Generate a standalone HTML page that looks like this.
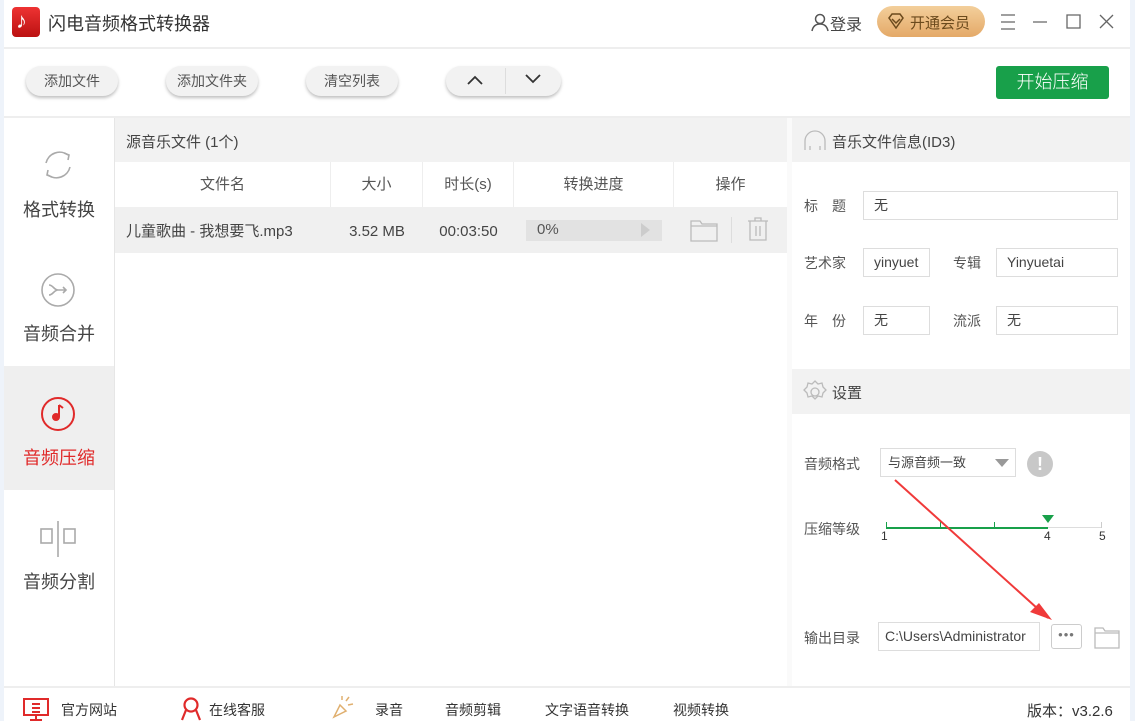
<!DOCTYPE html>
<html><head><meta charset="utf-8"><style>
*{margin:0;padding:0;box-sizing:border-box}
body{width:1135px;height:721px;overflow:hidden;background:#fff;font-family:"Liberation Sans","Noto Sans CJK SC",sans-serif;color:#333;position:relative;font-size:14px}
.a{position:absolute}
.btn{position:absolute;top:66px;height:30px;border-radius:15px;background:#f2f2f2;box-shadow:0 2px 3px rgba(0,0,0,.25);font-size:14px;color:#555;text-align:center;line-height:30px}
.side{position:absolute;left:4px;width:110px;text-align:center;font-size:18px;color:#444}
.th{position:absolute;top:162px;height:45px;line-height:45px;text-align:center;color:#555;font-size:15px;border-right:1px solid #eee}
.td{position:absolute;top:207px;height:46px;line-height:46px;text-align:center;color:#444;font-size:15px}
.lbl{position:absolute;font-size:14px;color:#555}
.inp{position:absolute;height:29px;border:1px solid #ddd;background:#fff;font-size:14px;color:#444;line-height:27px;padding-left:10px}
.ft{position:absolute;top:700px;font-size:14px;color:#333}
</style></head><body>
<div class="a" style="left:0;top:0;width:4px;height:721px;background:#eef3fa"></div>
<div class="a" style="left:1130px;top:0;width:5px;height:721px;background:#eef3fa"></div>
<!-- title -->
<div class="a" style="left:12px;top:7px;width:28px;height:30px;border-radius:4px;background:linear-gradient(#e33,#b11)"></div>
<div class="a" style="left:16px;top:8px;color:#fff;font-size:22px;font-weight:bold">♪</div>
<div class="a" style="left:48px;top:10px;font-size:18px;color:#333">闪电音频格式转换器</div>
<svg class="a" style="left:810px;top:12px" width="20" height="20" viewBox="0 0 20 20" fill="none" stroke="#555" stroke-width="1.5"><circle cx="10" cy="7" r="4.5"/><path d="M2 19c1-5 4-7 8-7s7 2 8 7"/></svg>
<div class="a" style="left:830px;top:11px;font-size:16px;color:#444">登录</div>
<div class="a" style="left:877px;top:6px;width:108px;height:31px;border-radius:16px;background:linear-gradient(#f3cf9b,#e4a968)"></div>
<svg class="a" style="left:887px;top:13px" width="18" height="17" viewBox="0 0 18 17" fill="none" stroke="#6b4a1d" stroke-width="1.5"><path d="M2 5l3-4h8l3 4-7 10z"/><path d="M5 6l4 4 4-4"/></svg>
<div class="a" style="left:910px;top:12px;font-size:15px;color:#6b4a1d">开通会员</div>
<svg class="a" style="left:998px;top:12px" width="120" height="20" fill="none" stroke="#666" stroke-width="1.3"><path d="M3 3h14M3 10h14M3 17h14M35 10h14M69 3h13v13H69zM102 3l13 13M115 3l-13 13"/></svg>
<div class="a" style="left:4px;top:47px;width:1126px;height:2px;background:#eee"></div>
<!-- toolbar -->
<div class="btn" style="left:26px;width:92px">添加文件</div>
<div class="btn" style="left:166px;width:92px">添加文件夹</div>
<div class="btn" style="left:306px;width:92px">清空列表</div>
<div class="btn" style="left:446px;width:115px"></div>
<div class="a" style="left:505px;top:68px;width:1px;height:26px;background:#ddd"></div>
<svg class="a" style="left:465px;top:73px" width="20" height="14" fill="none" stroke="#333" stroke-width="1.8"><path d="M3 11l7-7 7 7"/></svg>
<svg class="a" style="left:523px;top:72px" width="20" height="14" fill="none" stroke="#333" stroke-width="1.8"><path d="M3 3l7 7 7-7"/></svg>
<div class="a" style="left:996px;top:66px;width:113px;height:33px;background:#18a04a;border-radius:3px;color:#fff;font-size:18px;text-align:center;line-height:33px;font-weight:300">开始压缩</div>
<div class="a" style="left:4px;top:116px;width:1126px;height:2px;background:#eee"></div>
<!-- sidebar -->
<div class="a" style="left:114px;top:118px;width:1px;height:568px;background:#e6e6e6"></div>
<div class="a" style="left:4px;top:366px;width:110px;height:124px;background:#efefef"></div>
<svg class="a" style="left:40px;top:147px" width="36" height="36" fill="none" stroke="#aaa" stroke-width="1.6"><path d="M28 8a14 14 0 0 0-22 8"/><path d="M8 28a14 14 0 0 0 22-8"/><path d="M24 6l5 2-1 5"/><path d="M12 30l-5-2 1-5"/></svg>
<div class="side" style="top:196px">格式转换</div>
<svg class="a" style="left:40px;top:272px" width="36" height="36" fill="none" stroke="#aaa" stroke-width="1.6"><circle cx="18" cy="18" r="16"/><path d="M9 13c4 0 5 5 9 5M9 23c4 0 5-5 9-5h8M23 15l3 3-3 3"/></svg>
<div class="side" style="top:320px">音频合并</div>
<svg class="a" style="left:40px;top:396px" width="36" height="36" fill="none" stroke="#e02a2a" stroke-width="2"><circle cx="18" cy="18" r="16"/><path d="M19 9v12" /><circle cx="16" cy="21" r="3" fill="#e02a2a"/><path d="M19 9l4 3"/></svg>
<div class="side" style="top:444px;color:#e02a2a">音频压缩</div>
<svg class="a" style="left:40px;top:520px" width="36" height="38" fill="none" stroke="#aaa" stroke-width="1.6"><rect x="1" y="9" width="11" height="14"/><rect x="24" y="9" width="11" height="14"/><path d="M18 1v36"/></svg>
<div class="side" style="top:568px">音频分割</div>
<!-- list -->
<div class="a" style="left:115px;top:118px;width:672px;height:44px;background:#f2f2f2"></div>
<div class="a" style="left:126px;top:131px;font-size:15px;color:#444">源音乐文件 (1个)</div>
<div class="th" style="left:115px;width:216px">文件名</div>
<div class="th" style="left:331px;width:92px">大小</div>
<div class="th" style="left:423px;width:91px">时长(s)</div>
<div class="th" style="left:514px;width:160px">转换进度</div>
<div class="th" style="left:674px;width:113px;border:none">操作</div>
<div class="a" style="left:115px;top:207px;width:672px;height:46px;background:#f0f0f0"></div>
<div class="td" style="left:126px;text-align:left;top:209px">儿童歌曲 - 我想要飞.mp3</div>
<div class="td" style="left:331px;width:92px;top:209px">3.52 MB</div>
<div class="td" style="left:423px;width:91px;top:209px">00:03:50</div>
<div class="a" style="left:526px;top:220px;width:136px;height:21px;background:#e2e2e2"></div>
<div class="a" style="left:537px;top:221px;font-size:15px;color:#555">0%</div>
<div class="a" style="left:641px;top:223px;width:0;height:0;border-left:9px solid #ccc;border-top:7px solid transparent;border-bottom:7px solid transparent"></div>
<svg class="a" style="left:690px;top:218px" width="28" height="24" fill="none" stroke="#bbb" stroke-width="1.3"><path d="M1 3h9l2 3h15v17H1z M1 8h26"/></svg>
<div class="a" style="left:731px;top:217px;width:1px;height:26px;background:#ddd"></div>
<svg class="a" style="left:747px;top:216px" width="22" height="26" fill="none" stroke="#bbb" stroke-width="1.3"><path d="M1 5h20M8 5V2h6v3M3 5v19h16V5M9 10v10M13 10v10"/></svg>
<!-- right panel -->
<div class="a" style="left:787px;top:118px;width:5px;height:568px;background:#fafafa"></div>
<div class="a" style="left:792px;top:118px;width:338px;height:44px;background:#f2f2f2"></div>
<svg class="a" style="left:803px;top:128px" width="24" height="24" fill="none" stroke="#bbb" stroke-width="1.3"><path d="M2 22V13a10 10 0 0 1 20 0v9M7 18v4M17 18v4"/></svg>
<div class="a" style="left:832px;top:131px;font-size:15px;color:#444">音乐文件信息(ID3)</div>
<div class="lbl" style="left:804px;top:196px">标　题</div>
<div class="inp" style="left:863px;top:191px;width:255px">无</div>
<div class="lbl" style="left:804px;top:253px">艺术家</div>
<div class="inp" style="left:863px;top:248px;width:67px">yinyuet</div>
<div class="lbl" style="left:953px;top:253px">专辑</div>
<div class="inp" style="left:996px;top:248px;width:122px">Yinyuetai</div>
<div class="lbl" style="left:804px;top:311px">年　份</div>
<div class="inp" style="left:863px;top:306px;width:67px">无</div>
<div class="lbl" style="left:953px;top:311px">流派</div>
<div class="inp" style="left:996px;top:306px;width:122px">无</div>
<div class="a" style="left:792px;top:369px;width:338px;height:45px;background:#f2f2f2"></div>
<svg class="a" style="left:803px;top:380px" width="24" height="24" fill="none" stroke="#bbb" stroke-width="1.3"><circle cx="12" cy="12" r="4"/><path d="M12 1l3 3 4-1 1 4 3 3-3 3-1 4-4-1-3 3-3-3-4 1-1-4-3-3 3-3 1-4 4 1z"/></svg>
<div class="a" style="left:832px;top:382px;font-size:15px;color:#444">设置</div>
<div class="lbl" style="left:804px;top:454px">音频格式</div>
<div class="inp" style="left:880px;top:448px;width:136px;font-size:13px;padding-left:7px">与源音频一致</div>
<div class="a" style="left:995px;top:459px;border-top:8px solid #999;border-left:7px solid transparent;border-right:7px solid transparent"></div>
<div class="a" style="left:1027px;top:451px;width:26px;height:26px;border-radius:50%;background:#c8c8c8;color:#fff;font-weight:bold;text-align:center;line-height:26px;font-size:18px">!</div>
<div class="lbl" style="left:804px;top:519px">压缩等级</div>
<div class="a" style="left:886px;top:527px;width:162px;height:1.5px;background:#18a04a"></div>
<div class="a" style="left:1048px;top:527px;width:53px;height:1px;background:#ddd"></div>
<div class="a" style="left:886px;top:522px;width:1px;height:6px;background:#18a04a"></div>
<div class="a" style="left:940px;top:522px;width:1px;height:6px;background:#18a04a"></div>
<div class="a" style="left:994px;top:522px;width:1px;height:6px;background:#18a04a"></div>
<div class="a" style="left:1101px;top:522px;width:1px;height:6px;background:#ccc"></div>
<div class="a" style="left:1042px;top:515px;border-top:8px solid #18a04a;border-left:6px solid transparent;border-right:6px solid transparent"></div>
<div class="a" style="left:881px;top:529px;font-size:12px;color:#333">1</div>
<div class="a" style="left:1044px;top:529px;font-size:12px;color:#333">4</div>
<div class="a" style="left:1099px;top:529px;font-size:12px;color:#333">5</div>
<div class="lbl" style="left:804px;top:628px">输出目录</div>
<div class="inp" style="left:878px;top:622px;width:162px;padding-left:6px;overflow:hidden;white-space:nowrap">C:\Users\Administrator</div>
<div class="a" style="left:1051px;top:624px;width:31px;height:25px;border:1px solid #ccc;border-radius:3px;text-align:center;line-height:20px;color:#777;font-size:13px;letter-spacing:1px">•••</div>
<svg class="a" style="left:1094px;top:625px" width="26" height="24" fill="none" stroke="#bbb" stroke-width="1.3"><path d="M1 3h8l2 3h14v17H1z M1 8h24"/></svg>
<svg class="a" style="left:880px;top:470px" width="190" height="160"><path d="M15 10L168 148" stroke="#f03a3a" stroke-width="2"/><path d="M172 150l-22-8 9-9z" fill="#f03a3a"/></svg>
<!-- footer -->
<div class="a" style="left:4px;top:686px;width:1126px;height:2px;background:#eee"></div>
<svg class="a" style="left:23px;top:697px" width="26" height="24" fill="none" stroke="#e02a2a" stroke-width="2"><rect x="1" y="2" width="24" height="16"/><path d="M9 7h8M9 11h8M9 15h8M13 18v5M7 23h12"/></svg>
<div class="ft" style="left:61px">官方网站</div>
<svg class="a" style="left:180px;top:697px" width="22" height="24" fill="none" stroke="#e02a2a" stroke-width="2.2"><circle cx="11" cy="8" r="6.5"/><path d="M6 13l-4 10M16 13l4 10"/></svg>
<div class="ft" style="left:209px">在线客服</div>
<svg class="a" style="left:330px;top:695px" width="24" height="26" fill="none" stroke="#e0b070" stroke-width="1.5"><path d="M4 22l6-12 6 6z M16 6l3-4M18 10l5-1M12 5l0-4"/></svg>
<div class="ft" style="left:375px">录音</div>
<div class="ft" style="left:445px">音频剪辑</div>
<div class="ft" style="left:545px">文字语音转换</div>
<div class="ft" style="left:673px">视频转换</div>
<div class="ft" style="left:1027px;font-size:15px">版本：v3.2.6</div>
</body></html>
